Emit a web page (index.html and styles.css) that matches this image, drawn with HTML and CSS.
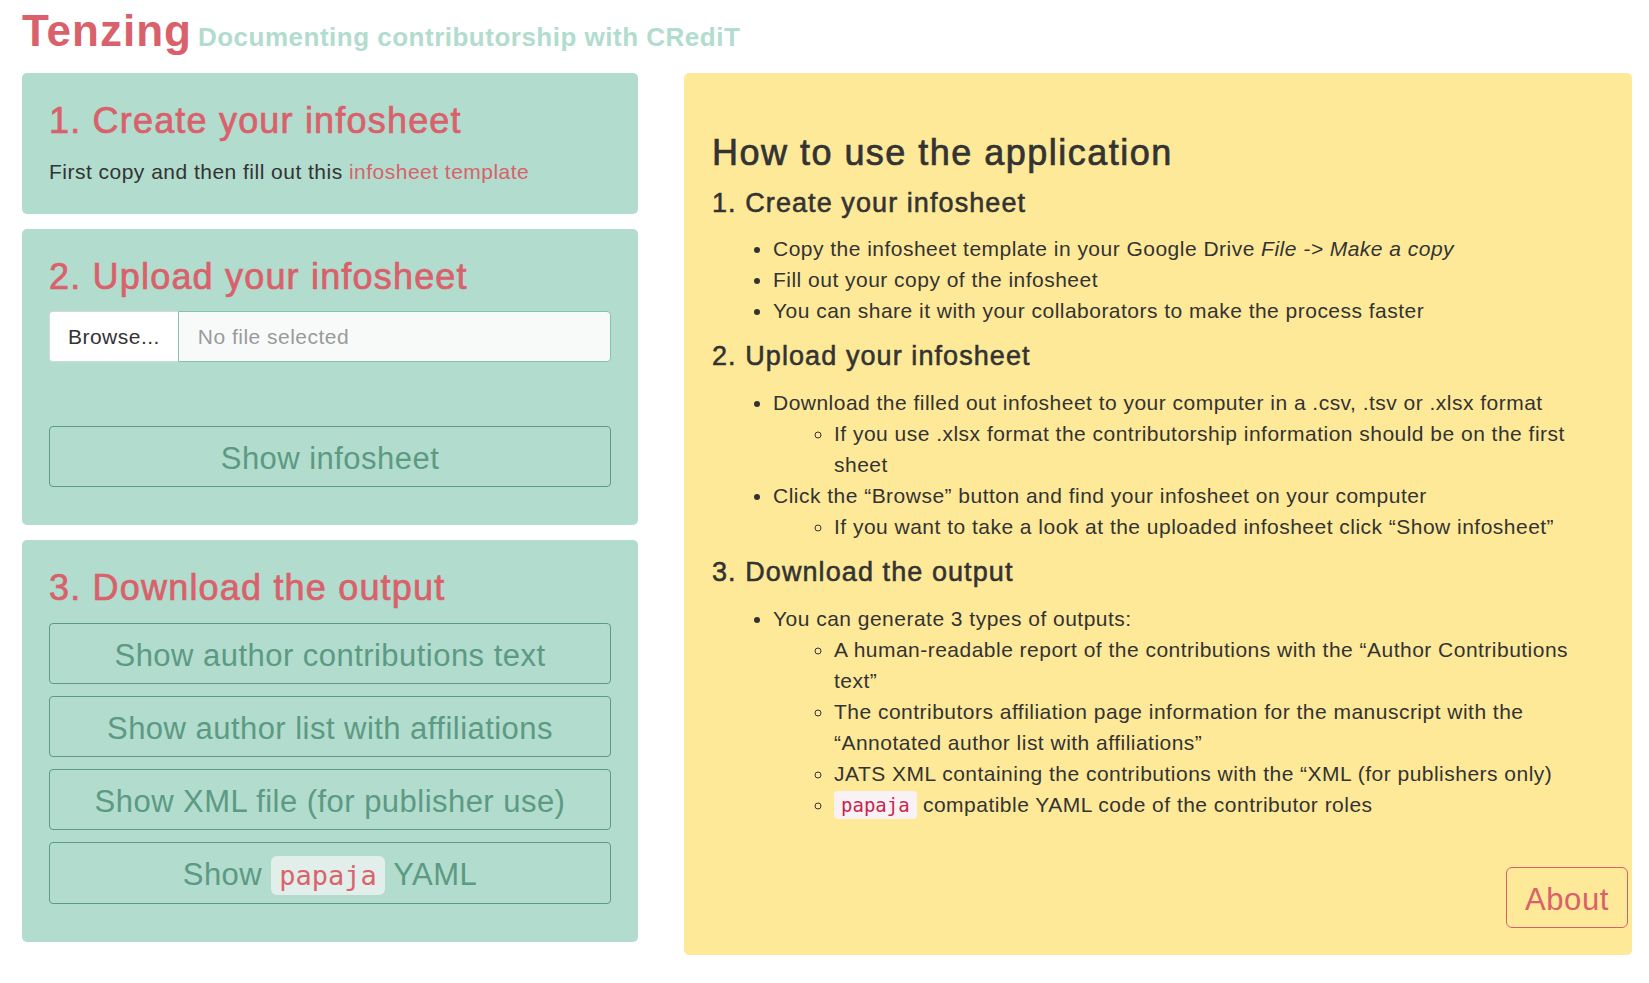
FILE: index.html
```html
<!DOCTYPE html>
<html lang="en">
<head>
<meta charset="utf-8">
<title>Tenzing</title>
<link rel="stylesheet" href="styles.css">
</head>
<body>
<header class="title">
  <span class="brand">Tenzing</span><span class="tagline">Documenting contributorship with CRediT</span>
</header>
<main class="layout">
  <div class="steps">
    <section class="well">
      <h2 class="well-title">1. Create your infosheet</h2>
      <p class="well-text">First copy and then fill out this <a class="link" href="#">infosheet template</a></p>
    </section>
    <section class="well">
      <h2 class="well-title">2. Upload your infosheet</h2>
      <div class="file-input">
        <span class="browse">Browse...</span>
        <span class="file-name">No file selected</span>
      </div>
      <button class="action action-spaced">Show infosheet</button>
    </section>
    <section class="well">
      <h2 class="well-title">3. Download the output</h2>
      <button class="action">Show author contributions text</button>
      <button class="action">Show author list with affiliations</button>
      <button class="action">Show XML file (for publisher use)</button>
      <button class="action">Show <code class="btn-code">papaja</code> YAML</button>
    </section>
  </div>
  <section class="guide">
    <div class="guide-body">
      <h2 class="guide-title">How to use the application</h2>
      <h3 class="guide-sub">1. Create your infosheet</h3>
      <ul class="list">
        <li>Copy the infosheet template in your Google Drive <em>File -&gt; Make a copy</em></li>
        <li>Fill out your copy of the infosheet</li>
        <li>You can share it with your collaborators to make the process faster</li>
      </ul>
      <h3 class="guide-sub">2. Upload your infosheet</h3>
      <ul class="list">
        <li>Download the filled out infosheet to your computer in a .csv, .tsv or .xlsx format
          <ul class="sublist">
            <li>If you use .xlsx format the contributorship information should be on the first sheet</li>
          </ul>
        </li>
        <li>Click the “Browse” button and find your infosheet on your computer
          <ul class="sublist">
            <li>If you want to take a look at the uploaded infosheet click “Show infosheet”</li>
          </ul>
        </li>
      </ul>
      <h3 class="guide-sub">3. Download the output</h3>
      <ul class="list">
        <li>You can generate 3 types of outputs:
          <ul class="sublist">
            <li>A human-readable report of the contributions with the “Author Contributions text”</li>
            <li>The contributors affiliation page information for the manuscript with the “Annotated author list with affiliations”</li>
            <li>JATS XML containing the contributions with the “XML (for publishers only)</li>
            <li><code class="code">papaja</code> compatible YAML code of the contributor roles</li>
          </ul>
        </li>
      </ul>
    </div>
    <div class="about-row">
      <button class="about">About</button>
    </div>
  </section>
</main>
</body>
</html>
```

FILE: styles.css
```css
* {
  box-sizing: border-box;
}

body {
  margin: 0;
  background: #ffffff;
  font-family: "Liberation Sans", Arial, Helvetica, sans-serif;
  color: #333333;
  letter-spacing: 0.03em;
}

.title {
  padding: 7px 0 0 22px;
  height: 55px;
  font-size: 44px;
  line-height: 48px;
  white-space: nowrap;
}

.brand {
  font-weight: bold;
  color: #d9616b;
  letter-spacing: 1px;
}

.tagline {
  margin-left: 6px;
  font-size: 26px;
  font-weight: bold;
  color: #b2dccd;
  letter-spacing: 0.5px;
}

.layout {
  display: grid;
  grid-template-columns: 616px 948px;
  column-gap: 46px;
  align-items: start;
  margin-top: 18px;
  padding-left: 22px;
}

.steps {
  display: flex;
  flex-direction: column;
  gap: 15px;
}

.well {
  background: #b2dccd;
  border-radius: 5px;
  padding: 28px 27px 27px 27px;
}

.well-title {
  margin: 0 0 15px;
  font-size: 36px;
  line-height: 1.1;
  font-weight: normal;
  letter-spacing: 0.033em;
  -webkit-text-stroke: 0.7px currentColor;
  color: #d9616b;
}

.well-text {
  margin: 0;
  font-size: 21px;
  line-height: 31px;
}

.link {
  color: #d9616b;
  text-decoration: none;
}

.file-input {
  display: flex;
  height: 51px;
  font-size: 21px;
  line-height: 49px;
}

.browse {
  background: #ffffff;
  border: 1px solid #d4d9d7;
  border-right: none;
  border-radius: 4px 0 0 4px;
  padding: 0 18px;
  color: #333333;
}

.file-name {
  flex: 1;
  background: #f7faf9;
  border: 1px solid #86c2ac;
  border-radius: 0 4px 4px 0;
  padding: 0 19px;
  color: #9a9a9a;
}

.action {
  display: block;
  width: 100%;
  margin: 0 0 12px;
  padding: 10px 12px 6px;
  background: transparent;
  border: 1px solid #5f9a86;
  border-radius: 4px;
  font-family: "Liberation Sans", Arial, Helvetica, sans-serif;
  font-size: 31px;
  line-height: 43px;
  letter-spacing: 0.015em;
  color: #5c9a83;
  text-align: center;
}

.action:last-child {
  margin-bottom: 11px;
}

.action-spaced {
  margin-top: 64px;
}

.btn-code {
  font-family: "DejaVu Sans Mono", "Liberation Mono", monospace;
  font-size: 27px;
  letter-spacing: 0;
  color: #d9646e;
  background: #e2eeea;
  border-radius: 6px;
  padding: 4px 8px;
}

.guide {
  background: #fee998;
  border-radius: 5px;
  padding: 28px 4px 27px 28px;
}

.guide-body {
  padding-right: 24px;
}

.guide-title {
  margin: 32px 0 16px;
  font-size: 36px;
  line-height: 1.1;
  font-weight: normal;
  letter-spacing: 0.041em;
  -webkit-text-stroke: 0.7px currentColor;
  color: #333333;
}

.guide-sub {
  margin: 15px 0;
  font-size: 27px;
  line-height: 1.1;
  font-weight: normal;
  letter-spacing: 0.04em;
  -webkit-text-stroke: 0.55px currentColor;
  color: #333333;
}

.list {
  margin: 0 0 16px;
  padding-left: 61px;
  font-size: 21px;
  line-height: 31px;
  list-style: disc;
}

.sublist {
  margin: 0;
  padding-left: 61px;
  list-style: circle;
}

.code {
  font-family: "DejaVu Sans Mono", "Liberation Mono", monospace;
  font-size: 19px;
  letter-spacing: 0;
  color: #c7254e;
  background: #f9f2f4;
  border-radius: 4px;
  padding: 3px 7px;
}

.about-row {
  display: flex;
  justify-content: flex-end;
  margin-top: 46px;
}

.about {
  padding: 10px 18px 6px;
  background: transparent;
  border: 1px solid #d9616b;
  border-radius: 6px;
  font-family: "Liberation Sans", Arial, Helvetica, sans-serif;
  font-size: 31px;
  line-height: 43px;
  letter-spacing: 0.02em;
  color: #d9616b;
}
```
